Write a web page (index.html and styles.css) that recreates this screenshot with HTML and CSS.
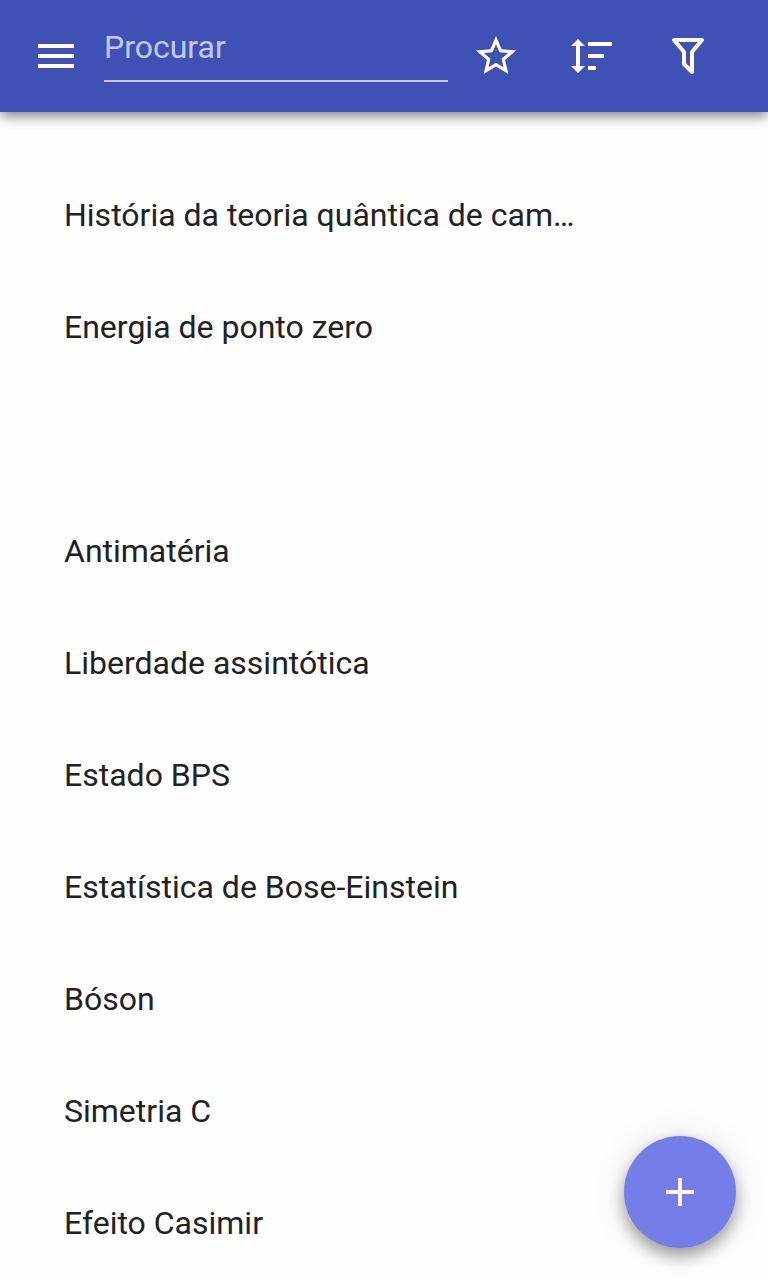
FILE: index.html
```html
<!DOCTYPE html>
<html lang="pt">
<head>
  <meta charset="UTF-8" />
  <meta name="viewport" content="width=device-width, initial-scale=1.0" />
  <title>Física quântica</title>
  <link rel="stylesheet" href="styles.css">
</head>
<body>

  <!-- Toolbar -->
  <header class="toolbar">
    <button class="menu-btn" type="button" aria-label="Menu">
      <svg class="icon" viewBox="0 0 24 24"><path d="M3 18h18v-2H3v2zm0-5h18v-2H3v2zm0-7v2h18V6H3z"/></svg>
    </button>
    <input class="search" type="text" placeholder="Procurar" aria-label="Procurar">
    <div class="actions">
      <button class="action-btn" type="button" aria-label="Favoritos">
        <svg class="icon" viewBox="0 0 24 24"><path d="M22 9.24l-7.19-.62L12 2 9.19 8.63 2 9.24l5.46 4.73L5.82 21 12 17.27 18.18 21l-1.63-7.03L22 9.24zM12 15.4l-3.76 2.27 1-4.28-3.32-2.88 4.38-.38L12 6.1l1.71 4.04 4.38.38-3.32 2.88 1 4.28L12 15.4z"/></svg>
      </button>
      <button class="action-btn" type="button" aria-label="Ordenar">
        <svg class="icon" viewBox="0 0 24 24"><path d="M6 7h2.5L5 3.5 1.5 7H4v10H1.5L5 20.5 8.5 17H6V7zM10 5v2h12V5H10zm0 8h8v-2h-8v2zm0 6h4v-2h-4v2z"/></svg>
      </button>
      <button class="action-btn" type="button" aria-label="Filtrar">
        <svg class="icon icon-outline" viewBox="0 0 24 24"><path d="M5 4h14l-5 6v10l-4-4v-6z"/></svg>
      </button>
    </div>
  </header>

  <!-- Article list -->
  <main>
    <ul class="list">
      <li><a href="#">História da teoria quântica de cam…</a></li>
      <li><a href="#">Energia de ponto zero</a></li>
      <li class="spacer"></li>
      <li><a href="#">Antimatéria</a></li>
      <li><a href="#">Liberdade assintótica</a></li>
      <li><a href="#">Estado BPS</a></li>
      <li><a href="#">Estatística de Bose-Einstein</a></li>
      <li><a href="#">Bóson</a></li>
      <li><a href="#">Simetria C</a></li>
      <li><a href="#">Efeito Casimir</a></li>
    </ul>
  </main>

  <!-- Floating add button -->
  <button class="fab" type="button" aria-label="Adicionar">
    <svg class="icon" viewBox="0 0 24 24"><path d="M19 13h-6v6h-2v-6H5v-2h6V5h2v6h6v2z"/></svg>
  </button>

</body>
</html>
```
FILE: styles.css
```css
* {
  margin: 0;
  padding: 0;
  box-sizing: border-box;
}
body {
  font-family: Roboto, sans-serif;
  font-size: 32px;
  background: #fefefe;
  color: #212121;
}
button {
  border: none;
  background: none;
  color: #ffffff;
  cursor: pointer;
}

/* Icons */
.icon {
  display: block;
  width: 48px;
  height: 48px;
  fill: currentColor;
}
.icon-outline {
  fill: none;
  stroke: currentColor;
  stroke-width: 2;
  stroke-linejoin: round;
}

/* Toolbar */
.toolbar {
  position: sticky;
  top: 0;
  z-index: 1;
  display: flex;
  align-items: center;
  height: 112px;
  padding: 0 32px;
  background: #3f51b5;
  box-shadow: 0 4px 12px rgba(0, 0, 0, 0.5);
}
.search {
  flex: 1;
  min-width: 0;
  height: 52px;
  margin-left: 24px;
  padding-bottom: 16px;
  border: none;
  border-bottom: 2px solid #c0cbf5;
  outline: none;
  background: none;
  font: inherit;
  color: #ffffff;
}
.search::placeholder {
  color: #c0cbf5;
  opacity: 1;
}
.actions {
  display: flex;
}
.action-btn {
  padding: 24px;
}

/* List */
.list {
  padding-top: 48px;
  list-style: none;
}
.list a,
.spacer {
  display: block;
  height: 112px;
  padding: 0 64px;
  line-height: 110px;
  color: inherit;
  text-decoration: none;
  white-space: nowrap;
  overflow: hidden;
  text-overflow: ellipsis;
}

/* Floating button */
.fab {
  position: fixed;
  right: 32px;
  bottom: 32px;
  padding: 32px;
  border-radius: 50%;
  background: #757de8;
  box-shadow: 0 8px 16px rgba(0, 0, 0, 0.35), 0 2px 36px rgba(0, 0, 0, 0.12);
}
```
